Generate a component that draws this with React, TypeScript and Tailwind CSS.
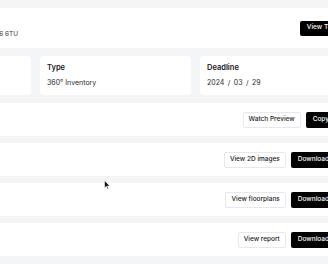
export default function App() {
  const rows = [
    { title: "Preview", secondary: "Watch Preview", primary: "Copy" },
    { title: "2D images", secondary: "View 2D images", primary: "Download" },
    { title: "Floorplans", secondary: "View floorplans", primary: "Download" },
    { title: "Report", secondary: "View report", primary: "Download" },
  ];
  const cards = [
    { label: "Status", value: "Completed", spaced: false },
    { label: "Type", value: "360° Inventory", spaced: false },
    { label: "Deadline", value: "2024 / 03 / 29", spaced: true },
  ];
  return (
    <div
      className="relative w-[328px] h-[264px] overflow-hidden bg-[#f4f5f7] text-[#1a1a1a]"
      style={{ fontFamily: "Inter, 'Liberation Sans', sans-serif" }}
    >
      <div className="w-[471px] ml-[-120px] pt-[8px] flex flex-col">
        <div className="h-[40px] bg-white rounded-[4px] flex items-center justify-between pl-[20px] pr-[6px]">
          <div className="flex flex-col gap-[2px]">
            <div className="text-[7.5px] leading-[10px] font-semibold whitespace-nowrap">Canada Water</div>
            <div className="text-[6.5px] leading-[10px] text-[#333] whitespace-nowrap">12 Surrey Quays Rd, London SE16 6TU</div>
          </div>
          <button className="h-[15px] px-[7px] bg-black text-white rounded-[2px] text-[6.5px] font-medium whitespace-nowrap">
            View Tour
          </button>
        </div>

        <div className="mt-[8px] grid grid-cols-3 gap-[9px]">
          {cards.map((c) => (
            <div key={c.label} className="h-[39px] bg-white rounded-[4px] pl-[7px] pt-[7px] flex flex-col gap-[5px]">
              <div className="text-[7.5px] leading-[10px] font-semibold">{c.label}</div>
              <div
                className={
                  c.spaced
                    ? "text-[7px] leading-[10px] text-[#2a2a2a] whitespace-nowrap [word-spacing:1.5px]"
                    : "text-[7px] leading-[10px] text-[#2a2a2a] whitespace-nowrap"
                }
              >
                {c.value}
              </div>
            </div>
          ))}
        </div>

        <div className="mt-[8px] flex flex-col gap-[7px]">
          {rows.map((r) => (
            <div key={r.title} className="h-[33px] bg-white rounded-[4px] flex items-center justify-between pl-[12px] pr-[15px]">
              <div className="text-[7.5px] font-semibold">{r.title}</div>
              <div className="flex items-center gap-[5px]">
                <button className="h-[16px] px-[5px] bg-white border border-[#e6e8eb] rounded-[2px] text-[6.5px] font-medium whitespace-nowrap text-[#222]">
                  {r.secondary}
                </button>
                <button className="h-[16px] px-[7px] bg-black text-white rounded-[2px] text-[6.5px] font-medium whitespace-nowrap">
                  {r.primary}
                </button>
              </div>
            </div>
          ))}
        </div>
      </div>

      <svg className="absolute left-[104px] top-[180px]" width="7" height="10" viewBox="0 0 7 10">
        <path d="M0.5 0.5 L0.5 8 L2.3 6.3 L3.6 9.2 L4.6 8.8 L3.4 6 L5.8 6 Z" fill="#111" stroke="#fff" strokeWidth="0.6" />
      </svg>
    </div>
  );
}
